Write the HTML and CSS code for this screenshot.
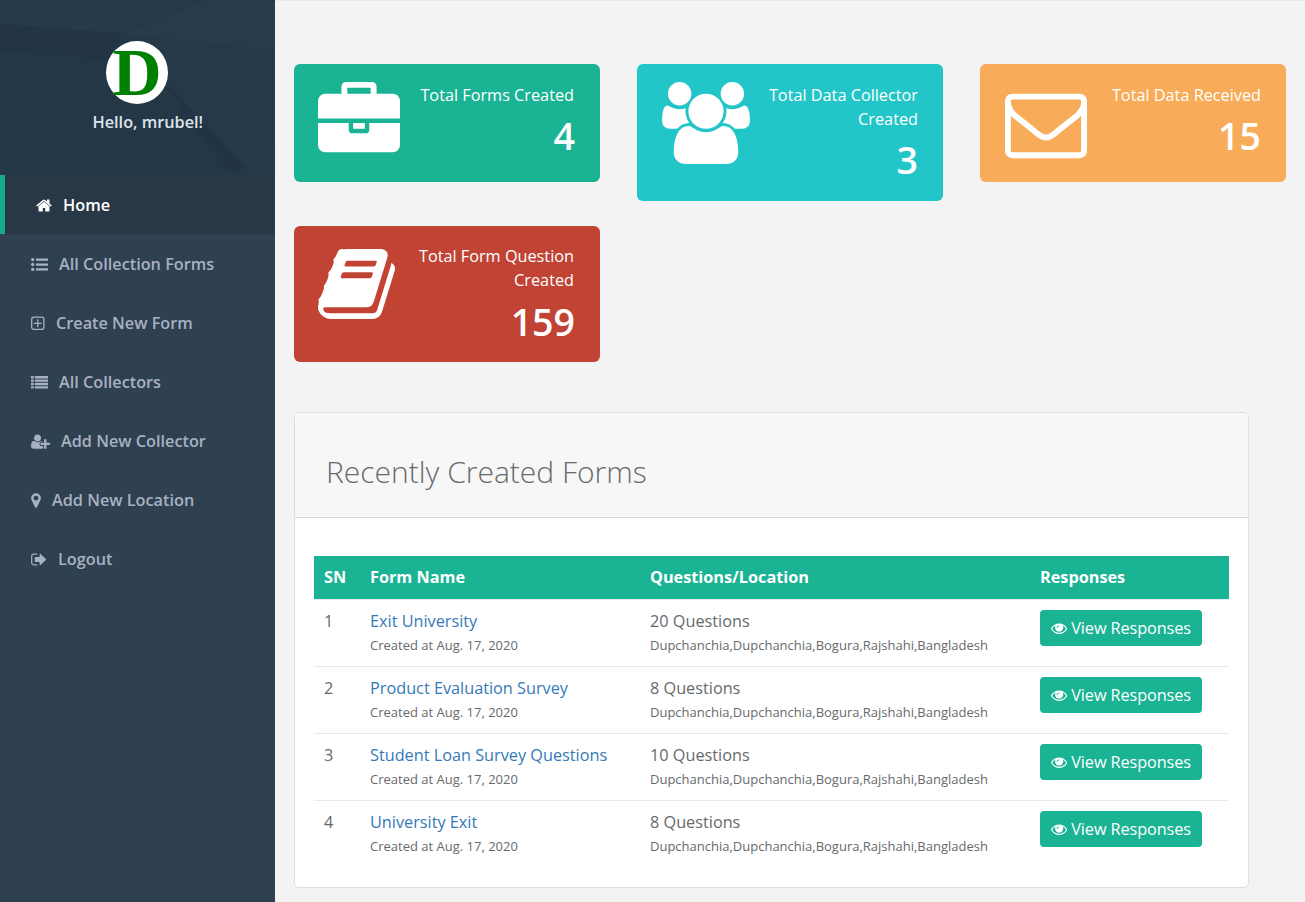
FILE: index.html
```html
<!DOCTYPE html>
<html lang="en">
<head>
<meta charset="utf-8">
<title>Dashboard</title>
<link rel="stylesheet" href="styles.css">
</head>
<body>
<svg class="defs" width="0" height="0">
  <symbol id="eye" viewBox="0 0 1792 1792"><path d="M1664 960q-152-236-381-353 61 104 61 225 0 185-131.5 316.5t-316.5 131.5-316.5-131.5-131.5-316.5q0-121 61-225-229 117-381 353 133 205 333.5 326.5t434.5 121.5 434.5-121.5 333.5-326.5zm-720-384q0-20-14-34t-34-14q-125 0-214.5 89.5t-89.5 214.5q0 20 14 34t34 14 34-14 14-34q0-86 61-147t147-61q20 0 34-14t14-34zm848 384q0 34-20 69-140 230-376.5 368.5t-499.5 138.5-499.5-139-376.5-368q-20-35-20-69t20-69q140-229 376.5-368t499.5-139 499.5 139 376.5 368q20 35 20 69z"/><circle cx="896" cy="850" r="330"/><path class="glint" d="M680 850q0-205 216-205"/></symbol>
</svg>
<div class="layout">
  <nav class="sidebar">
    <div class="profile">
      <svg class="facets" viewBox="0 0 275 175" preserveAspectRatio="none">
        <path fill="#273a49" d="M0 0H150L125 34L0 24Z"/>
        <path fill="#263948" d="M206 0L125 34L150 0Z"/>
        <path fill="#283b4a" d="M206 0H275V50L210 60L125 34Z"/>
        <path fill="#233544" d="M0 24L125 34L106 60L0 50Z"/>
        <path fill="#253847" d="M0 50L32 156L0 175Z"/>
        <path fill="#263948" d="M125 34L275 50V140L245 167L168 84Z"/>
        <path fill="#223443" d="M168 84L245 167L230 172L190 125Z"/>
        <path fill="#273a49" d="M245 167L275 141V175H250Z"/>
      </svg>
      <div class="avatar">D</div>
      <div class="hello">Hello, mrubel!</div>
    </div>
    <ul class="menu">
      <li class="item active"><svg class="ic w15" viewBox="64 0 1664 1792"><path d="M1472 992v480q0 26-19 45t-45 19h-384v-384h-256v384h-384q-26 0-45-19t-19-45v-480q0-1 .5-3t.5-3l575-474 575 474q1 2 1 6zm223-69l-62 74q-8 9-21 11h-3q-13 0-21-7l-692-577-692 577q-12 8-24 7-13-2-21-11l-62-74q-8-10-7-23.5t11-21.5l719-599q32-26 76-26t76 26l244 204v-195q0-14 9-23t23-9h192q14 0 23 9t9 23v408l219 182q10 8 11 21.5t-7 23.5z"/></svg><span>Home</span></li>
      <li class="item"><svg class="ic w17" viewBox="0 0 17 17"><circle cx="1.700" cy="3.600" r="1.700"/><circle cx="1.700" cy="8.500" r="1.700"/><circle cx="1.700" cy="13.400" r="1.700"/><path d="M5 2.500h12v2.300H5zM5 7.400h12v2.300H5zM5 12.200h12v2.300H5z"/></svg><span>All Collection Forms</span></li>
      <li class="item"><svg class="ic w13" viewBox="0 0 14 17"><rect class="line" x=".7" y="2.200" width="12.200" height="12.200" rx="2.200"/><path class="line" d="M6.800 4.300v8M2.800 8.300h8"/></svg><span>Create New Form</span></li>
      <li class="item"><svg class="ic w17" viewBox="0 0 17 17"><path d="M0 2h2.800v2.400H0zM0 5.400h2.800v2.400H0zM0 8.800h2.800v2.400H0zM0 12.200h2.800v2.400H0zM3.800 2H17v2.400H3.800zM3.800 5.400H17v2.400H3.800zM3.800 8.800H17v2.400H3.800zM3.800 12.200H17v2.400H3.800z"/></svg><span>All Collectors</span></li>
      <li class="item"><svg class="ic w19" viewBox="0 0 2048 1792"><path d="M704 896q-159 0-271.500-112.500t-112.500-271.500 112.500-271.500 271.500-112.500 271.500 112.500 112.500 271.500-112.500 271.500-271.500 112.500zm960 128h352q13 0 22.500 9.500t9.500 22.500v192q0 13-9.500 22.500t-22.500 9.500h-352v352q0 13-9.500 22.500t-22.500 9.500h-192q-13 0-22.500-9.500t-9.500-22.500v-352h-352q-13 0-22.500-9.500t-9.500-22.500v-192q0-13 9.500-22.500t22.500-9.500h352v-352q0-13 9.500-22.500t22.500-9.500h192q13 0 22.500 9.500t9.500 22.500v352zm-736 224q0 52 38 90t90 38h256v238q-68 50-171 50h-874q-121 0-194-69t-73-190q0-53 3.500-103.500t14-109 26.500-108.500 43-97.500 62-81 85.500-53.500 111.500-20q19 0 39 17 79 61 154.500 91.500t164.500 30.500 164.500-30.500 154.500-91.500q20-17 39-17 132 0 217 96h-223q-52 0-90 38t-38 90v192z"/></svg><span>Add New Collector</span></li>
      <li class="item"><svg class="ic w10" viewBox="384 0 1024 1792"><path d="M1152 640q0-106-75-181t-181-75-181 75-75 181 75 181 181 75 181-75 75-181zm256 0q0 109-33 179l-364 774q-16 33-47.500 52t-67.500 19-67.500-19-46.500-52l-365-774q-33-70-33-179 0-212 150-362t362-150 362 150 150 362z"/></svg><span>Add New Location</span></li>
      <li class="item"><svg class="ic w15" viewBox="96 0 1600 1792"><path d="M704 1440q0 4 1 20t.5 26.500-3 23.500-10 19.500-20.500 6.500h-320q-119 0-203.500-84.500t-84.500-203.500v-704q0-119 84.500-203.500t203.500-84.500h320q13 0 22.500 9.500t9.500 22.500q0 4 1 20t.5 26.500-3 23.500-10 19.500-20.500 6.500h-320q-66 0-113 47t-47 113v704q0 66 47 113t113 47h312l11.500 1 11.500 3 8 5.500 7 9 2 13.500zm928-544q0 26-19 45l-544 544q-19 19-45 19t-45-19-19-45v-288h-448q-26 0-45-19t-19-45v-384q0-26 19-45t45-19h448v-288q0-26 19-45t45-19 45 19l544 544q19 19 19 45z"/></svg><span>Logout</span></li>
    </ul>
  </nav>
  <main class="content">
    <section class="widgets">
      <div class="widget teal">
        <svg class="big" viewBox="0 0 1792 1792"><path d="M640 256h512v-128h-512v128zm1152 640v480q0 66-47 113t-113 47h-1472q-66 0-113-47t-47-113v-480h672v160q0 26 19 45t45 19h320q26 0 45-19t19-45v-160h672zm-768 0v128h-256v-128h256zm768-480v384h-1792v-384q0-66 47-113t113-47h352v-160q0-40 28-68t68-28h576q40 0 68 28t28 68v160h352q66 0 113 47t47 113z"/></svg>
        <div class="stat"><span>Total Forms Created</span><strong>4</strong></div>
      </div>
      <div class="widget cyan">
        <svg class="big wide" viewBox="0 0 1920 1792"><path d="M593 896q-162 5-265 128h-134q-82 0-138-40.500t-56-118.500q0-353 124-353 6 0 43.500 21t97.500 42.500 119 21.500q67 0 133-23-5 37-5 66 0 139 81 256zm1071 637q0 120-73 189.500t-194 69.500h-874q-121 0-194-69.500t-73-189.500q0-53 3.500-103.500t14-109 26.500-108.500 43-97.500 62-81 85.500-53.500 111.500-20q10 0 43 21.500t73 48 107 48 135 21.500 135-21.500 107-48 73-48 43-21.500q61 0 111.500 20t85.500 53.500 62 81 43 97.500 26.500 108.500 14 109 3.500 103.500zm-1024-1277q0 106-75 181t-181 75-181-75-75-181 75-181 181-75 181 75 75 181zm704 384q0 159-112.500 271.500t-271.500 112.500-271.500-112.500-112.500-271.500 112.500-271.500 271.500-112.500 271.500 112.500 112.500 271.500zm576 225q0 78-56 118.500t-138 40.500h-134q-103-123-265-128 81-117 81-256 0-29-5-66 66 23 133 23 59 0 119-21.500t97.500-42.500 43.500-21q124 0 124 353zm-128-609q0 106-75 181t-181 75-181-75-75-181 75-181 181-75 181 75 75 181z"/></svg>
        <div class="stat"><span>Total Data Collector<br>Created</span><strong>3</strong></div>
      </div>
      <div class="widget orange">
        <svg class="big" viewBox="0 0 1792 1792"><path d="M1664 1504v-768q-32 36-69 66-268 206-426 338-51 43-83 67t-86.500 48.500-102.500 24.500h-2q-48 0-102.500-24.500t-86.500-48.500-83-67q-158-132-426-338-37-30-69-66v768q0 13 9.500 22.500t22.500 9.500h1472q13 0 22.500-9.500t9.500-22.500zm0-1051v-24.500l-.5-13-3-12.500-5.500-9-9-7.500-14-2.500h-1472q-13 0-22.500 9.500t-9.500 22.500q0 168 147 284 193 152 401 317 6 5 35 29.500t46 37.500 44.500 31.500 50.500 27.500 43 9h2q20 0 43-9t50.500-27.500 44.500-31.500 46-37.500 35-29.500q208-165 401-317 54-43 100.500-115.500t46.500-131.500zm128-37v1088q0 66-47 113t-113 47h-1472q-66 0-113-47t-47-113v-1088q0-66 47-113t113-47h1472q66 0 113 47t47 113z"/></svg>
        <div class="stat"><span>Total Data Received</span><strong>15</strong></div>
      </div>
      <div class="widget red">
        <svg class="big book" viewBox="64 128 1664 1536" preserveAspectRatio="none"><path d="M1703 478q40 57 18 129l-275 906q-19 64-76.500 107.500t-122.500 43.500h-923q-77 0-148.500-53.500t-99.500-131.500q-24-67-2-127 0-4 3-27t4-37q1-8-3-21.500t-3-19.500q2-11 8-21t16.500-23.500 16.500-23.500q23-38 45-91.500t30-91.500q3-10 .5-30t-.5-28q3-11 17-28t17-23q21-36 42-92t25-90q1-9-2.500-32t.5-28q4-13 22-30.500t22-22.500q19-26 42.500-84.500t27.500-96.500q1-8-3-25.500t-2-26.500q2-8 9-18t18-23 17-21q8-12 16.500-30.500t15-35 16-36 19.500-32 26.500-23.500 36-11.500 47.500 5.500l-1 3q38-9 51-9h761q74 0 114 56t18 130l-274 906q-36 119-71.500 153.500t-128.500 34.500h-869q-27 0-38 15-11 16-1 43 24 70 144 70h923q29 0 56-15.500t35-41.500l300-987q7-22 5-57 38 15 59 43zm-1064 2q-4 13 2 22.500t20 9.500h608q13 0 25.500-9.500t16.500-22.500l21-64q4-13-2-22.500t-20-9.500h-608q-13 0-25.500 9.500t-16.500 22.500zm-83 256q-4 13 2 22.500t20 9.500h608q13 0 25.500-9.500t16.500-22.500l21-64q4-13-2-22.500t-20-9.500h-608q-13 0-25.500 9.500t-16.500 22.500z"/></svg>
        <div class="stat"><span>Total Form Question<br>Created</span><strong>159</strong></div>
      </div>
    </section>
    <section class="panel">
      <header class="panel-head"><h2>Recently Created Forms</h2></header>
      <div class="panel-body">
        <table class="forms">
          <thead><tr><th class="c1">SN</th><th class="c2">Form Name</th><th class="c3">Questions/Location</th><th>Responses</th></tr></thead>
          <tbody>
            <tr><td>1</td><td><a>Exit University</a><small>Created at Aug. 17, 2020</small></td><td>20 Questions<small>Dupchanchia,Dupchanchia,Bogura,Rajshahi,Bangladesh</small></td><td><button class="btn"><svg class="eye"><use href="#eye"/></svg><span>View Responses</span></button></td></tr>
            <tr><td>2</td><td><a>Product Evaluation Survey</a><small>Created at Aug. 17, 2020</small></td><td>8 Questions<small>Dupchanchia,Dupchanchia,Bogura,Rajshahi,Bangladesh</small></td><td><button class="btn"><svg class="eye"><use href="#eye"/></svg><span>View Responses</span></button></td></tr>
            <tr><td>3</td><td><a>Student Loan Survey Questions</a><small>Created at Aug. 17, 2020</small></td><td>10 Questions<small>Dupchanchia,Dupchanchia,Bogura,Rajshahi,Bangladesh</small></td><td><button class="btn"><svg class="eye"><use href="#eye"/></svg><span>View Responses</span></button></td></tr>
            <tr><td>4</td><td><a>University Exit</a><small>Created at Aug. 17, 2020</small></td><td>8 Questions<small>Dupchanchia,Dupchanchia,Bogura,Rajshahi,Bangladesh</small></td><td><button class="btn"><svg class="eye"><use href="#eye"/></svg><span>View Responses</span></button></td></tr>
          </tbody>
        </table>
      </div>
    </section>
  </main>
</div>
</body>
</html>
```
FILE: styles.css
```css
* { box-sizing: border-box; }
body { margin: 0; background: #f3f3f4; color: #676a6c; font: 16.25px/24px "Open Sans", "Noto Sans", sans-serif; overflow: hidden; }
.defs { position: absolute; }
svg { fill: currentColor; display: block; flex: none; }
.layout { display: flex; height: 902px; }

.sidebar { width: 275px; background: #2f4050; flex: none; }
.profile { position: relative; height: 175px; background: #243746; padding: 41px 0 0; color: #dfe4ed; font-weight: 600; }
.facets { position: absolute; inset: 0; width: 275px; height: 175px; }
.avatar { position: relative; width: 62px; height: 63px; margin-left: 106px; padding-left: 1px; border-radius: 50%; background: #fff; color: #008000; font: bold 68px/62px "Liberation Serif", serif; text-align: center; text-indent: -1px; }
.hello { position: relative; margin: 6px 0 0 92.5px; white-space: nowrap; }
.menu { list-style: none; margin: 0; padding: 0; }
.item { height: 59px; display: flex; align-items: center; padding-left: 31px; gap: 11px; color: #a7b1c2; font-weight: 600; }
.active { background: #293846; color: #fff; border-left: 5px solid #19aa8d; }
.ic { height: 17px; margin-top: 2px; }
.w10 { width: 10px; }
.w13 { width: 14px; }
.w15 { width: 16px; }
.w17 { width: 17px; }
.w19 { width: 19px; }
.line { fill: none; stroke: currentColor; stroke-width: 1.3; }

.content { flex: 1; padding: 63px 19px 0; border-top: 1px solid #e7eaec; }
.widgets { display: grid; grid-template-columns: repeat(3, 306px); column-gap: 37px; row-gap: 25px; align-items: start; }
.widget { border-radius: 6px; color: #fff; display: flex; justify-content: space-between; padding: 18px 25px 0 24px; height: 118px; }
.teal { background: #1ab394; padding-right: 26px; }
.cyan { background: #23c6c8; height: 137px; padding-left: 24.5px; }
.orange { background: #f8ac59; padding-left: 25px; }
.red { background: #c04334; height: 136px; padding-right: 26px; }
.teal strong, .red strong { margin-right: -1px; }
.big { width: 82px; height: 82px; }
.wide { width: 88px; }
.book { width: 77px; height: 70px; margin-top: 5px; }
.stat { display: flex; flex-direction: column; text-align: right; padding-top: 1px; white-space: nowrap; }
.red .stat { padding-top: 0; }
.stat strong { font-size: 37.5px; line-height: 41px; font-weight: 600; margin-top: 8px; }
.red .stat strong { margin-top: 9px; }

.panel { width: 955px; height: 476px; margin-top: 50px; background: #fff; border: 1px solid #dedfe0; border-radius: 5px; overflow: hidden; }
.panel-head { height: 105px; background: #f7f7f7; border-bottom: 1px solid #d8d9da; padding: 42px 31px 0; }
.panel-head h2 { margin: 0; font-weight: 300; font-size: 30px; line-height: 34px; }
.panel-body { padding: 38px 19px 0; }
.forms { width: 915px; border-collapse: collapse; table-layout: fixed; }
.forms th { height: 43px; padding: 0 10px; background: #1ab394; color: #fff; text-align: left; font-weight: 700; }
.forms td { height: 67px; padding: 9px 10px 0; border-top: 1px solid #e7eaec; vertical-align: top; }
.c1 { width: 46px; }
.c2 { width: 280px; }
.c3 { width: 390px; }
.forms a { color: #337ab7; display: block; }
.forms small { display: block; font-size: 13px; line-height: 24px; }
.btn { display: flex; align-items: center; gap: 4px; width: 162px; height: 36px; margin-top: 1px; padding: 0 11px; border: 0; border-radius: 4px; background: #1ab394; color: #fff; font: inherit; letter-spacing: -.09px; white-space: nowrap; }
.eye { width: 16.25px; height: 16.25px; margin-top: 1px; }
.glint { fill: none; stroke: #1ab394; stroke-width: 90; stroke-linecap: round; }
```
